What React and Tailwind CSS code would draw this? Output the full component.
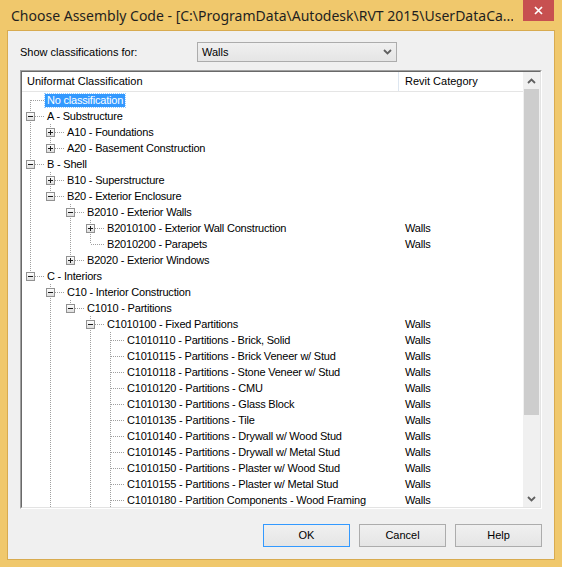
import React from "react";

const leaves = [
    "C1010110 - Partitions - Brick, Solid",
    "C1010115 - Partitions - Brick Veneer w/ Stud",
    "C1010118 - Partitions - Stone Veneer w/ Stud",
    "C1010120 - Partitions - CMU",
    "C1010130 - Partitions - Glass Block",
    "C1010135 - Partitions - Tile",
    "C1010140 - Partitions - Drywall w/ Wood Stud",
    "C1010145 - Partitions - Drywall w/ Metal Stud",
    "C1010150 - Partitions - Plaster w/ Wood Stud",
    "C1010155 - Partitions - Plaster w/ Metal Stud",
    "C1010180 - Partition Components - Wood Framing",
];

// the visible part of the classification tree
const tree = [
    { t: "No classification", sel: true },
    {
        t: "A - Substructure",
        open: true,
        c: [
            { t: "A10 - Foundations", closed: true },
            { t: "A20 - Basement Construction", closed: true },
        ],
    },
    {
        t: "B - Shell",
        open: true,
        c: [
            { t: "B10 - Superstructure", closed: true },
            {
                t: "B20 - Exterior Enclosure",
                open: true,
                c: [
                    {
                        t: "B2010 - Exterior Walls",
                        open: true,
                        c: [
                            { t: "B2010100 - Exterior Wall Construction", cat: "Walls", closed: true },
                            { t: "B2010200 - Parapets", cat: "Walls" },
                        ],
                    },
                    { t: "B2020 - Exterior Windows", closed: true },
                ],
            },
        ],
    },
    {
        t: "C - Interiors",
        open: true,
        c: [
            {
                t: "C10 - Interior Construction",
                open: true,
                next: true,
                c: [
                    {
                        t: "C1010 - Partitions",
                        open: true,
                        c: [
                            {
                                t: "C1010100 - Fixed Partitions",
                                cat: "Walls",
                                open: true,
                                next: true,
                                c: leaves.map((t, i) => ({
                                    t,
                                    cat: "Walls",
                                    next: i === leaves.length - 1 ? true : undefined,
                                })),
                            },
                        ],
                    },
                ],
            },
        ],
    },
];

const flatten = (nodes, level, guides, out) => {
    nodes.forEach((n, i) => {
        const hasNext = n.next ?? i < nodes.length - 1;
        out.push({ ...n, level, guides, hasNext, first: level === 0 && i === 0 });
        if (n.c) flatten(n.c, level + 1, [...guides, hasNext], out);
    });
    return out;
};

const rows = flatten(tree, 0, [], []);

const DOT = "#a0a0a0";

const Guides = ({ row }) => {
    const { level, guides, hasNext, first } = row;
    const w = 23 + 20 * level;
    const cx = 8 + 20 * level;
    const box = row.open || row.closed;
    return (
        <svg width={w} height="16" className="shrink-0" shapeRendering="crispEdges">
            {guides.map((g, k) =>
                g ? (
                    <line key={k} x1={8 + 20 * k + 0.5} y1="0" x2={8 + 20 * k + 0.5} y2="16" stroke={DOT} strokeDasharray="1 1" />
                ) : null
            )}
            {!first && <line x1={cx + 0.5} y1="0" x2={cx + 0.5} y2="8" stroke={DOT} strokeDasharray="1 1" />}
            {hasNext && <line x1={cx + 0.5} y1="8" x2={cx + 0.5} y2="16" stroke={DOT} strokeDasharray="1 1" />}
            <line x1={cx + 1} y1="8.5" x2={w} y2="8.5" stroke={DOT} strokeDasharray="1 1" />
            {box && (
                <g>
                    <defs>
                        <linearGradient id="exp" x1="0" y1="0" x2="0" y2="1">
                            <stop offset="0" stopColor="#ffffff" />
                            <stop offset="1" stopColor="#dcdcdc" />
                        </linearGradient>
                    </defs>
                    <rect x={cx - 3.5} y="4.5" width="8" height="8" fill="url(#exp)" stroke="#919191" />
                    <line x1={cx - 2} y1="8.5" x2={cx + 3} y2="8.5" stroke="#1a1a1a" />
                    {row.closed && <line x1={cx + 0.5} y1="6" x2={cx + 0.5} y2="11" stroke="#1a1a1a" />}
                </g>
            )}
        </svg>
    );
};

const Chevron = ({ up }) => (
    <svg width="9" height="6" viewBox="0 0 9 6">
        <polyline
            points={up ? "1,5 4.5,1.5 8,5" : "1,1 4.5,4.5 8,1"}
            fill="none"
            stroke="#606060"
            strokeWidth="1.8"
        />
    </svg>
);

const Button = ({ label, primary }) => (
    <button
        className={`w-[87px] h-[23px] text-[11px] text-black bg-gradient-to-b from-[#f0f0f0] to-[#e5e5e5] border ${
            primary ? "border-[#3399ff]" : "border-[#acacac]"
        }`}
    >
        {label}
    </button>
);

export default function App() {
    return (
        <div className="w-[562px] h-[567px] bg-[#f0c86c] flex flex-col font-['Liberation_Sans',Arial,sans-serif] overflow-hidden">
            {/* title bar */}
            <div className="h-[31px] flex items-start shrink-0">
                <div className="w-[513px] pl-[11px] pt-[5px] text-[14px] text-[#1f1f1f] whitespace-nowrap overflow-hidden font-['Noto_Sans',sans-serif]">
                    Choose Assembly Code - [C:\ProgramData\Autodesk\RVT 2015\UserDataCa...
                </div>
                <div className="ml-auto mr-[8px] w-[31px] h-[21px] bg-[#c75050] flex items-center justify-center">
                    <svg width="9" height="9" viewBox="0 0 9 9">
                        <path d="M1 1 L8 8 M8 1 L1 8" stroke="#ffffff" strokeWidth="1.7" />
                    </svg>
                </div>
            </div>

            {/* client area */}
            <div className="mx-[8px] w-[546px] h-[528px] bg-[#f0f0f0] ring-1 ring-[#d8ab50] px-[12px] pt-[11px] flex flex-col">
                <div className="flex items-center h-[20px]">
                    <span className="w-[177px] text-[11px] text-black">Show classifications for:</span>
                    <div className="w-[200px] h-[20px] border border-[#acacac] bg-gradient-to-b from-[#f0f0f0] to-[#e5e5e5] flex items-center pl-[4px] pr-[4px]">
                        <span className="text-[11px] text-black flex-1">Walls</span>
                        <Chevron />
                    </div>
                </div>

                {/* tree list */}
                <div className="mt-[8px] w-[522px] h-[439px] border border-t-[#a0a0a0] border-l-[#a0a0a0] border-b-white border-r-white">
                    <div className="h-full border border-t-[#696969] border-l-[#696969] border-b-[#e3e3e3] border-r-[#e3e3e3] flex">
                        <div className="flex-1 flex flex-col bg-white overflow-hidden">
                            <div className="h-[20px] flex shrink-0 border-b border-[#e5e5e5] text-[11px] text-black">
                                <div className="w-[377px] pl-[5px] flex items-center border-r border-[#dde6f0]">
                                    Uniformat Classification
                                </div>
                                <div className="pl-[6px] flex items-center">Revit Category</div>
                            </div>
                            <div className="flex-1 overflow-hidden">
                                {rows.map((r, i) => (
                                    <div key={i} className="h-[16px] flex items-center text-[11px] tracking-[-0.2px] text-black">
                                        <div className="w-[377px] shrink-0 flex items-center whitespace-nowrap">
                                            <Guides row={r} />
                                            <span
                                                className={
                                                    r.sel
                                                        ? "px-[2px] h-[13px] leading-[13px] bg-[#3399ff] text-white outline-1 outline-dotted outline-[#99ccff]"
                                                        : "px-[2px]"
                                                }
                                            >
                                                {r.t}
                                            </span>
                                        </div>
                                        <div className="pl-[6px]">{r.cat}</div>
                                    </div>
                                ))}
                            </div>
                        </div>
                        <div className="w-[17px] shrink-0 bg-[#f0f0f0] flex flex-col">
                            <div className="h-[17px] flex items-center justify-center">
                                <Chevron up />
                            </div>
                            <div className="h-[326px] mx-[1px] bg-[#cdcdcd]" />
                            <div className="flex-1" />
                            <div className="h-[17px] flex items-center justify-center">
                                <Chevron />
                            </div>
                        </div>
                    </div>
                </div>

                <div className="mt-[15px] flex justify-end gap-[9px]">
                    <Button label="OK" primary />
                    <Button label="Cancel" />
                    <Button label="Help" />
                </div>
            </div>
        </div>
    );
}
